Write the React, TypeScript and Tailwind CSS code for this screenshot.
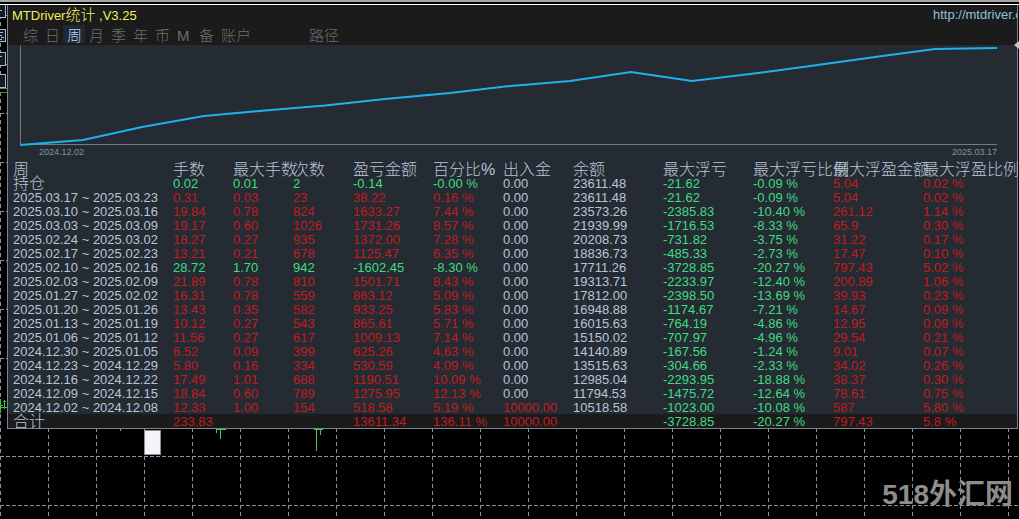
type Row = string[];

const columns = [
  { label: '周', width: 'w-[160px]' },
  { label: '手数', width: 'w-[60px]' },
  { label: '最大手数', width: 'w-[60px]' },
  { label: '次数', width: 'w-[60px]' },
  { label: '盈亏金额', width: 'w-20' },
  { label: '百分比%', width: 'w-[70px]' },
  { label: '出入金', width: 'w-[70px]' },
  { label: '余额', width: 'w-[90px]' },
  { label: '最大浮亏', width: 'w-[90px]' },
  { label: '最大浮亏比例', width: 'w-20' },
  { label: '最大浮盈金额', width: 'w-[90px]' },
  { label: '最大浮盈比例', width: '' },
];

const rows: Row[] = [
  ['持仓', '0.02', '0.01', '2', '-0.14', '-0.00 %', '0.00', '23611.48', '-21.62', '-0.09 %', '5.04', '0.02 %'],
  ['2025.03.17 ~ 2025.03.23', '0.31', '0.03', '23', '38.22', '0.16 %', '0.00', '23611.48', '-21.62', '-0.09 %', '5.04', '0.02 %'],
  ['2025.03.10 ~ 2025.03.16', '19.84', '0.78', '824', '1633.27', '7.44 %', '0.00', '23573.26', '-2385.83', '-10.40 %', '261.12', '1.14 %'],
  ['2025.03.03 ~ 2025.03.09', '19.17', '0.60', '1026', '1731.26', '8.57 %', '0.00', '21939.99', '-1716.53', '-8.33 %', '65.9', '0.30 %'],
  ['2025.02.24 ~ 2025.03.02', '18.27', '0.27', '935', '1372.00', '7.28 %', '0.00', '20208.73', '-731.82', '-3.75 %', '31.22', '0.17 %'],
  ['2025.02.17 ~ 2025.02.23', '13.21', '0.21', '678', '1125.47', '6.35 %', '0.00', '18836.73', '-485.33', '-2.73 %', '17.47', '0.10 %'],
  ['2025.02.10 ~ 2025.02.16', '28.72', '1.70', '942', '-1602.45', '-8.30 %', '0.00', '17711.26', '-3728.85', '-20.27 %', '797.43', '5.02 %'],
  ['2025.02.03 ~ 2025.02.09', '21.89', '0.78', '810', '1501.71', '8.43 %', '0.00', '19313.71', '-2233.97', '-12.40 %', '200.89', '1.06 %'],
  ['2025.01.27 ~ 2025.02.02', '16.31', '0.78', '559', '863.12', '5.09 %', '0.00', '17812.00', '-2398.50', '-13.69 %', '39.93', '0.23 %'],
  ['2025.01.20 ~ 2025.01.26', '13.43', '0.35', '582', '933.25', '5.83 %', '0.00', '16948.88', '-1174.67', '-7.21 %', '14.67', '0.09 %'],
  ['2025.01.13 ~ 2025.01.19', '10.12', '0.27', '543', '865.61', '5.71 %', '0.00', '16015.63', '-764.19', '-4.86 %', '12.95', '0.09 %'],
  ['2025.01.06 ~ 2025.01.12', '11.56', '0.27', '617', '1009.13', '7.14 %', '0.00', '15150.02', '-707.97', '-4.96 %', '29.54', '0.21 %'],
  ['2024.12.30 ~ 2025.01.05', '6.52', '0.09', '399', '625.26', '4.63 %', '0.00', '14140.89', '-167.56', '-1.24 %', '9.01', '0.07 %'],
  ['2024.12.23 ~ 2024.12.29', '5.80', '0.16', '334', '530.59', '4.09 %', '0.00', '13515.63', '-304.66', '-2.33 %', '34.02', '0.26 %'],
  ['2024.12.16 ~ 2024.12.22', '17.49', '1.01', '688', '1190.51', '10.09 %', '0.00', '12985.04', '-2293.95', '-18.88 %', '38.37', '0.30 %'],
  ['2024.12.09 ~ 2024.12.15', '18.84', '0.60', '789', '1275.95', '12.13 %', '0.00', '11794.53', '-1475.72', '-12.64 %', '78.61', '0.75 %'],
  ['2024.12.02 ~ 2024.12.08', '12.33', '1.00', '154', '518.58', '5.19 %', '10000.00', '10518.58', '-1023.00', '-10.08 %', '587', '5.80 %'],
];

const total: Row = ['合计', '233.83', '', '', '13611.34', '136.11 %', '10000.00', '', '-3728.85', '-20.27 %', '797.43', '5.8 %'];

const tabs = [
  { label: '综', width: 'w-[22px]' },
  { label: '日', width: 'w-[22px]' },
  { label: '周', width: 'w-[22px]' },
  { label: '月', width: 'w-[22px]' },
  { label: '季', width: 'w-[22px]' },
  { label: '年', width: 'w-[22px]' },
  { label: '币', width: 'w-[22px]' },
  { label: 'M', width: 'w-[22px]' },
  { label: '备', width: 'w-[22px]' },
  { label: '账户', width: 'w-[88px]' },
  { label: '路径', width: 'w-10' },
];

function cellColor(row: Row, index: number) {
  if (index === 0 || index === 7 || row[index] === '0.00') return 'text-[#b8c6d8]';
  if (index === 8 || index === 9) return 'text-[#3fdc84]';
  if (index < 6 && row[4].startsWith('-')) return 'text-[#3fdc84]';
  return 'text-[#c01c20]';
}

function MarketGrid() {
  return (
    <svg className="absolute inset-0 h-full w-full" aria-hidden="true" shapeRendering="crispEdges">
      <defs>
        <pattern id="grid" width="48" height="49" y="15" patternUnits="userSpaceOnUse">
          <path d="M0.5 0V49" stroke="#8c9298" strokeDasharray="4 3" />
          <path d="M0 0.5H48" stroke="#8c9298" strokeDasharray="4 2" />
        </pattern>
      </defs>
      <rect y="5" width="100%" height="100%" fill="url(#grid)" />
      <path d="M0 92.5H8" stroke="#3f8f35" />
      <path d="M0 88.5H8" stroke="#6c7884" />
      <g fill="#141b22" stroke="#a9b9cc">
        <rect x="-4.5" y="4.5" width="10" height="13" rx="1" />
        <rect x="-4.5" y="29.5" width="10" height="12" rx="1" />
        <rect x="-4.5" y="52.5" width="10" height="13" rx="1" />
        <rect x="-4.5" y="74.5" width="10" height="13" rx="1" />
      </g>
      <path d="M0 32.5H3M0 35.5H2M1 37.5H4M0 39.5H2M0 10.5H2M0 56.5H2" stroke="#a9b9cc" />
      <path d="M0.5 399V413M4.5 400V409M3 401.5H6M3 407.5H6M0 405.5H3" stroke="#35c83c" />
      <path d="M120.5 429V431M216.5 429V433M220.5 429V439M216 429.5H226M316.5 429V451M320.5 429V435M314 429.5H323" stroke="#45c850" />
      <rect x="144.5" y="430.5" width="16" height="24" fill="#f2f4fa" stroke="#8a8f98" />
    </svg>
  );
}

function BalanceChart() {
  return (
    <div className="h-[115px]">
      <svg className="h-[101px] w-full" viewBox="0 0 1009 101" preserveAspectRatio="none" role="img" aria-label="余额">
        <path d="M12.5 1V99.5H989" fill="none" stroke="#737a80" />
        <polyline
          points="12,100 75,95 134,82 196,71 257,65.5 317,60.5 377,54 442,48 497,41.5 562,36 623,27 684,36 742,29 806,20.5 867,12 927,4 989,3"
          fill="none"
          stroke="#1eb2ec"
          strokeWidth="2"
        />
      </svg>
      <div className="flex justify-between pl-[31px] pr-5 text-[9px] leading-3 text-[#85919c]">
        <span>2024.12.02</span>
        <span>2025.03.17</span>
      </div>
    </div>
  );
}

function StatsRow({ row }: { row: Row }) {
  const labelSize = row[0].startsWith('20') ? '' : ' text-base leading-3 font-light';

  return (
    <tr className="h-[14px]">
      {row.map((cell, i) => (
        <td key={i} className={'p-0 pt-0.5 pl-[5px] leading-3 ' + cellColor(row, i) + (i === 0 ? labelSize : '')}>
          {cell}
        </td>
      ))}
    </tr>
  );
}

function StatsTable() {
  return (
    <table className="w-full table-fixed text-left text-[13px] whitespace-nowrap">
      <colgroup>
        {columns.map((column) => (
          <col key={column.label} className={column.width} />
        ))}
      </colgroup>
      <thead>
        <tr className="h-4 text-base text-[#b8c6d8]">
          {columns.map((column) => (
            <th key={column.label} scope="col" className="p-0 pt-1 pl-[5px] leading-3 font-light">
              {column.label}
            </th>
          ))}
        </tr>
      </thead>
      <tbody>
        {rows.map((row) => (
          <StatsRow key={row[0]} row={row} />
        ))}
      </tbody>
      <tfoot className="bg-[#1b1b1b]">
        <StatsRow row={total} />
      </tfoot>
    </table>
  );
}

export default function App() {
  return (
    <div className="relative min-h-screen overflow-hidden bg-black font-['Liberation_Sans','Noto_Sans_CJK_SC',sans-serif]">
      <MarketGrid />
      <div className="relative h-[5px] border-t-2 border-b border-t-[#a8a8a8] border-b-white bg-black" />
      <main className="relative ml-[7px] mr-px border-r border-b border-l border-[#7b858f] bg-[#252b33]">
        <header className="bg-[#1b1b1b]">
          <div className="flex h-5 items-center justify-between overflow-hidden pl-1 whitespace-nowrap">
            <h1 className="text-[13px] leading-5 text-[#f0f060]">
              MTDriver<span className="text-[15px] font-light">统计</span> ,V3.25
            </h1>
            <a href="http://mtdriver.com" className="w-[84px] text-[13px] leading-5 text-[#8fc1dc]">
              http://mtdriver.com
            </a>
          </div>
          <nav className="flex h-5 pl-[11px] text-[15px] text-[#6e6e6e]">
            {tabs.map((tab) => (
              <button
                key={tab.label}
                className={
                  tab.width +
                  ' h-[18px] pl-1 text-left leading-[22px] font-light whitespace-nowrap ' +
                  (tab.label === '周' ? 'bg-[#1f2935] text-[#b8d4f4]' : '')
                }
              >
                {tab.label}
              </button>
            ))}
          </nav>
        </header>
        <BalanceChart />
        <StatsTable />
      </main>
      <svg className="absolute top-[41px] right-0 h-2 w-[5px]" viewBox="0 0 5 8" aria-hidden="true">
        <path d="M5 0V8L0 4Z" fill="#c8c8c8" />
      </svg>
      <div className="absolute right-1.5 bottom-1 text-[28px] leading-10 font-bold text-[#8e8c8c]">518外汇网</div>
    </div>
  );
}
